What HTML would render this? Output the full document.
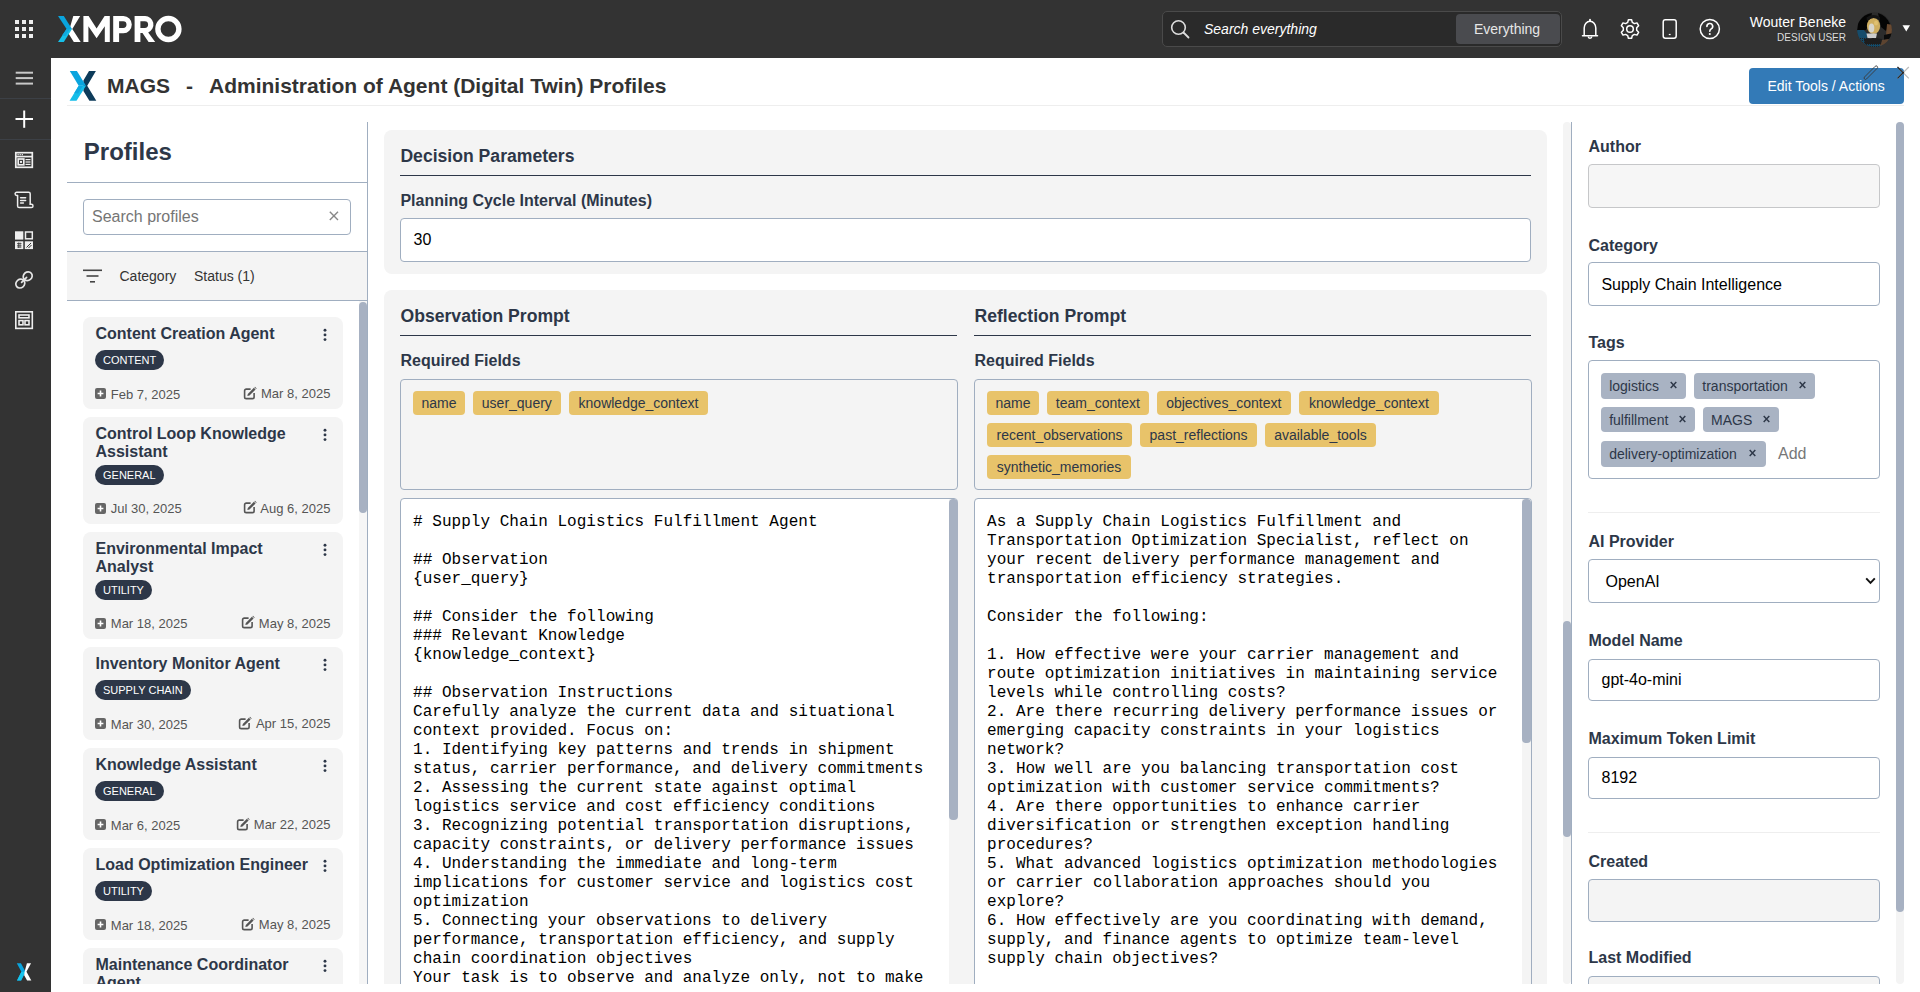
<!DOCTYPE html>
<html><head><meta charset="utf-8">
<style>
*{box-sizing:border-box;margin:0;padding:0}
html,body{width:1920px;height:992px;overflow:hidden;background:#fff;font-family:"Liberation Sans",sans-serif;color:#2d3748}
.a{position:absolute}
.t{position:absolute;white-space:nowrap;line-height:1}
.b{font-weight:bold}
.inp{position:absolute;background:#fff;border:1px solid #a0aec0;border-radius:4px}
.card{position:absolute;left:83px;width:260px;background:#f4f4f4;border-radius:8px}
.badge{position:absolute;left:12px;height:20px;border-radius:10px;background:#2d3748;color:#fff;font-size:11px;line-height:20px;padding:0 8px;white-space:nowrap}
.ytag{position:absolute;height:24px;background:#e8c36a;border-radius:4px;font-size:14px;line-height:24px;color:#2d3748;padding:0 8px;white-space:nowrap}
.gtag{position:absolute;height:25px;background:#a9b3c3;border-radius:4px;font-size:14px;line-height:25px;color:#2d3748;padding:0 8px;white-space:nowrap}
.mono{position:absolute;font-family:"Liberation Mono",monospace;font-size:16px;line-height:19px;letter-spacing:0.03px;white-space:pre;color:#000}
.sbt{position:absolute;background:#f4f4f4;border-radius:4px}
.sbth{position:absolute;background:#a7b1c2;border-radius:4px}
</style></head><body>
<div class="a" style="left:0;top:0;width:1920px;height:58px;background:#333"></div>
<div class="a" style="left:0;top:57px;width:51px;height:935px;background:#333"></div>
<div class="a" style="left:15px;top:20px;width:4px;height:4px;background:#eee"></div><div class="a" style="left:22px;top:20px;width:4px;height:4px;background:#eee"></div><div class="a" style="left:29px;top:20px;width:4px;height:4px;background:#eee"></div><div class="a" style="left:15px;top:27px;width:4px;height:4px;background:#eee"></div><div class="a" style="left:22px;top:27px;width:4px;height:4px;background:#eee"></div><div class="a" style="left:29px;top:27px;width:4px;height:4px;background:#eee"></div><div class="a" style="left:15px;top:34px;width:4px;height:4px;background:#eee"></div><div class="a" style="left:22px;top:34px;width:4px;height:4px;background:#eee"></div><div class="a" style="left:29px;top:34px;width:4px;height:4px;background:#eee"></div>
<svg class="a" style="left:56px;top:14px" width="130" height="30" viewBox="56 14 130 30">
<polygon points="73.3,16 80.2,16 72.3,29 80.7,42 73.8,42 68.5,33.5 69.5,29" fill="#fff"/>
<polygon points="58,16 63.8,16 72,29 66.6,29" fill="#0aa4dd"/>
<polygon points="66.6,29 72,29 63.8,42 58,42" fill="#16c0ea"/>
<polygon points="62,35.5 66.6,29 70,29 65.5,36" fill="#0fa9e0"/>
<path d="M83.4,42 V16 H88.6 L96.6,28.5 L104.6,16 H109.8 V42 H104.8 V26.2 L96.6,38.2 L88.4,26.2 V42 Z" fill="#fff"/>
<path d="M113.2,42 V16 H123.4 A8.4,8.6 0 0 1 123.4,33.2 H119.1 V42 Z M119.1,21.2 V27.9 H123.2 A3.3,3.35 0 0 0 123.2,21.2 Z" fill="#fff" fill-rule="evenodd"/>
<path d="M134.6,42 V16 H145 A8.3,8.5 0 0 1 148.2,32.4 L155.2,42 H148.6 L142.5,33.1 H140.4 V42 Z M140.4,21.2 V27.9 H144.8 A3.3,3.35 0 0 0 144.8,21.2 Z" fill="#fff" fill-rule="evenodd"/>
<path d="M168.4,15.8 A13.2,13.2 0 1 1 168.4,42.2 A13.2,13.2 0 1 1 168.4,15.8 Z M168.4,21.2 A7.8,7.8 0 1 0 168.4,36.8 A7.8,7.8 0 1 0 168.4,21.2 Z" fill="#fff" fill-rule="evenodd"/>
</svg>
<div class="a" style="left:1162px;top:11px;width:400px;height:36px;background:#2a2a2a;border:1px solid #4a4a4a;border-radius:5px"></div>
<svg class="a" style="left:1170px;top:19px" width="22" height="22" viewBox="0 0 22 22"><circle cx="8.5" cy="8.5" r="6.8" fill="none" stroke="#ddd" stroke-width="1.6"/><line x1="13.5" y1="13.5" x2="18.5" y2="18.5" stroke="#ddd" stroke-width="1.8" stroke-linecap="round"/></svg>
<div class="t " style="left:1204px;top:21.5px;font-size:14px;color:#fff;font-style:italic">Search everything</div>
<div class="a" style="left:1456px;top:14px;width:104px;height:30px;background:#4a4b4f;border-radius:4px"></div>
<div class="t " style="left:1474px;top:21.5px;font-size:14px;color:#e6e6e6">Everything</div>
<svg class="a" style="left:1578px;top:16px" width="150" height="26" viewBox="1578 16 150 26">
<path d="M1590,19.5 a1.3,1.3 0 0 1 0,0 M1584.2,35.8 V28 a5.8,6.8 0 0 1 11.6,0 V35.8 Z M1582.5,35.8 H1597.5" fill="none" stroke="#fff" stroke-width="1.5" stroke-linejoin="round" stroke-linecap="round"/>
<path d="M1588.2,36.5 a1.8,1.8 0 0 0 3.6,0" fill="none" stroke="#fff" stroke-width="1.4"/>
<circle cx="1590" cy="20.3" r="1" fill="#fff"/>
<g transform="translate(1630,29)" fill="none" stroke="#fff" stroke-width="1.5" stroke-linejoin="round">
<path d="M-1.6,-9.2 H1.6 L2.3,-6.6 L4.4,-5.4 L7,-6.1 L8.6,-3.3 L6.7,-1.3 V1.3 L8.6,3.3 L7,6.1 L4.4,5.4 L2.3,6.6 L1.6,9.2 H-1.6 L-2.3,6.6 L-4.4,5.4 L-7,6.1 L-8.6,3.3 L-6.7,1.3 V-1.3 L-8.6,-3.3 L-7,-6.1 L-4.4,-5.4 L-2.3,-6.6 Z"/>
<circle cx="0" cy="0" r="3.3"/>
</g>
<rect x="1663.2" y="19.7" width="13" height="18.6" rx="2.2" fill="none" stroke="#fff" stroke-width="1.5"/>
<line x1="1668.8" y1="34.5" x2="1670.6" y2="34.5" stroke="#fff" stroke-width="1.2"/>
<circle cx="1709.8" cy="29" r="9.6" fill="none" stroke="#fff" stroke-width="1.5"/>
<path d="M1706.9,26.4 a2.9,2.9 0 1 1 4.3,2.5 c-1,0.6 -1.4,1.1 -1.4,2.3" fill="none" stroke="#fff" stroke-width="1.6" stroke-linecap="round"/>
<circle cx="1709.8" cy="34" r="1.05" fill="#fff"/>
</svg>
<div class="t" style="right:74px;top:14.7px;font-size:14px;color:#fff">Wouter Beneke</div>
<div class="t" style="right:74px;top:33px;font-size:10px;color:#ddd">DESIGN USER</div>
<svg class="a" style="left:1856px;top:12px" width="38" height="36" viewBox="1856 12 38 36">
<defs><clipPath id="av"><circle cx="1874.5" cy="29.7" r="17.4"/></clipPath>
<pattern id="dots" width="2" height="2" patternUnits="userSpaceOnUse"><rect width="2" height="2" fill="#134a68"/><rect width="1" height="1" fill="#222"/></pattern></defs>
<g clip-path="url(#av)">
<rect x="1856" y="12" width="38" height="36" fill="#2c2c2c"/>
<path d="M1857,31 L1858,22 Q1864,14 1872,13 L1870,22 L1866,30 Z" fill="#040404"/>
<path d="M1878,13 Q1887,16 1890,24 L1886,31 L1881,27 L1879,18 Z" fill="#050505"/>
<path d="M1856,30 H1864 L1868,35 L1866,39 H1856 Z" fill="#164c6b"/>
<path d="M1859,38 L1868,38 L1884,43 L1882,48 H1860 Z" fill="url(#dots)"/>
<path d="M1887,24 L1893,25 V34 L1886,35 Z" fill="#6a4a30"/>
<path d="M1884,35 L1893,33 V38 L1884,40 Z" fill="#0a0a0a"/>
<path d="M1882,40 L1889,39 L1887,46 L1880,46 Z" fill="#5d4430"/>
<ellipse cx="1873.5" cy="26" rx="6.6" ry="8" fill="#cfae60"/>
<ellipse cx="1871.5" cy="28" rx="2.8" ry="4.6" fill="#d8d5cc"/>
<ellipse cx="1876" cy="23" rx="2" ry="2.5" fill="#e0c070"/>
<path d="M1867,21 Q1873,15.5 1880,20.5 L1880,17 Q1873,13 1866.5,17.5 Z" fill="#141414"/>
<path d="M1866.5,33.5 L1877,33.5 L1876,38 L1872,39.5 L1867.5,38 Z" fill="#cdcdcd"/>
<path d="M1864,39 Q1873,37 1882,39 L1881,44 H1865 Z" fill="#1d1d1d"/>
</g></svg>
<svg class="a" style="left:1901px;top:24px" width="10" height="8" viewBox="0 0 10 8"><polygon points="1.5,1.3 9,1.3 5.25,7.4" fill="#fff"/></svg>
<svg class="a" style="left:0;top:57px" width="51" height="935" viewBox="0 57 51 935">
<g stroke="#c8c8c8" stroke-width="2" stroke-linecap="butt"><line x1="15.7" y1="72.7" x2="33" y2="72.7"/><line x1="15.7" y1="78.1" x2="33" y2="78.1"/><line x1="15.7" y1="83.6" x2="33" y2="83.6"/></g>
<line x1="0" y1="98.5" x2="51" y2="98.5" stroke="#3c4046" stroke-width="1"/>
<g stroke="#fff" stroke-width="2"><line x1="15.5" y1="119" x2="33" y2="119"/><line x1="24.2" y1="110.5" x2="24.2" y2="127.8"/></g>
<line x1="0" y1="139.5" x2="51" y2="139.5" stroke="#3c4046" stroke-width="1"/>
<g fill="none" stroke="#eee" stroke-width="1.7">
<rect x="15.8" y="152.7" width="16.5" height="14.6"/>
<line x1="15.8" y1="156.6" x2="32.3" y2="156.6"/>
<rect x="18.2" y="159" width="5.6" height="5.8"/>
<line x1="25.5" y1="159.6" x2="30.5" y2="159.6" stroke-width="1.2"/><line x1="25.5" y1="162" x2="30.5" y2="162" stroke-width="1.2"/><line x1="25.5" y1="164.4" x2="30.5" y2="164.4" stroke-width="1.2"/>
</g>
<rect x="20" y="160.9" width="2" height="2" fill="#eee"/>
<g fill="#eee"><rect x="17.5" y="154" width="1.2" height="1.3"/><rect x="19.6" y="154" width="1.2" height="1.3"/><rect x="21.7" y="154" width="1.2" height="1.3"/></g>
<g fill="none" stroke="#eee" stroke-width="1.5" stroke-linejoin="round" stroke-linecap="round">
<path d="M17.4,195.5 H16.7 a1.6,1.65 0 0 1 0,-3.3 H28.6 a1.6,1.6 0 0 1 1.6,1.6 V204.3"/>
<path d="M17.6,195.5 V205.9 a1.6,1.6 0 0 0 1.6,1.6 H31.4 a1.6,1.6 0 0 0 0,-3.2 H30.2"/>
<line x1="20.6" y1="197.7" x2="25.6" y2="197.7"/><line x1="20.6" y1="200.4" x2="25.6" y2="200.4"/><line x1="20.6" y1="203.1" x2="23.4" y2="203.1"/>
</g>
<rect x="15" y="231.3" width="8.3" height="8.3" fill="#eee"/>
<rect x="25.5" y="232" width="6.8" height="6.8" fill="none" stroke="#eee" stroke-width="1.5"/>
<rect x="15" y="241.3" width="8.3" height="7.8" fill="#eee"/>
<rect x="24.8" y="241.3" width="8.2" height="7.8" fill="#eee"/>
<g stroke="#333" stroke-width="0.7"><line x1="17" y1="243.5" x2="21.5" y2="243.5"/><line x1="17" y1="245.3" x2="21.5" y2="245.3"/><line x1="17" y1="247" x2="21.5" y2="247"/><line x1="18.5" y1="242.5" x2="18.5" y2="248"/><line x1="20" y1="242.5" x2="20" y2="248"/></g>
<g stroke="#333" stroke-width="1"><line x1="26.5" y1="247.5" x2="31" y2="243"/><line x1="28.5" y1="248" x2="31.5" y2="245"/></g>
<g fill="none" stroke="#e6e6e6" stroke-width="1.7" stroke-linecap="round">
<ellipse cx="0" cy="0" rx="4.7" ry="4.2" transform="translate(27.7,276.2) rotate(-40)"/>
<ellipse cx="0" cy="0" rx="4.7" ry="4.2" transform="translate(20.3,283.6) rotate(-40)"/>
<line x1="21.6" y1="282.4" x2="26.6" y2="277.3"/>
</g>
<g fill="none" stroke="#eee" stroke-width="1.6">
<rect x="15.8" y="311.8" width="16.5" height="16.6"/>
<rect x="19" y="315" width="10" height="2.8"/>
<rect x="19" y="320.6" width="4" height="4.2"/>
<rect x="25" y="320.6" width="4" height="4.2"/>
</g>
<g transform="translate(16.8,963.3) scale(0.92,0.95)">
<polygon points="0,0 4.5,0 9.5,9 4.7,18 0.2,18 5,9" fill="#0aa4dd"/>
<polygon points="0.2,18 4.7,18 9.5,9 6.8,9 5,9" fill="#18c4ec"/>
<polygon points="11,0 15.5,0 10.5,9 15.8,18 11.2,18 8,12.5 8.5,9" fill="#fff"/>
</g>
</svg>
<svg class="a" style="left:68px;top:70px" width="30" height="32" viewBox="68 70 30 32">
<polygon points="89,71 95.9,71 87.2,85.8 96.3,100.7 89.4,100.7 83.4,91 83.4,80.6" fill="#0d3b5a"/>
<polygon points="69.8,71 76.9,71 86,85.8 78.7,85.8" fill="#0aa4de"/>
<polygon points="78.7,85.8 86,85.8 76.5,100.7 69.6,100.7" fill="#14bde9"/>
<polygon points="74.3,93 78.7,85.8 83,85.8 78.2,93.5" fill="#0ea8e0"/>
</svg>
<div class="t " style="left:107px;top:75px;font-size:21px;color:#333;font-weight:bold">MAGS</div>
<div class="t " style="left:186px;top:75px;font-size:21px;color:#333;font-weight:bold">-</div>
<div class="t " style="left:209px;top:75px;font-size:21px;color:#333;font-weight:bold">Administration of Agent (Digital Twin) Profiles</div>
<div class="a" style="left:67px;top:105px;width:1837px;height:1px;background:#eee"></div>
<div class="a" style="left:1749px;top:68px;width:155px;height:36px;background:#337ab7;border-radius:4px"></div>
<div class="t " style="left:1767.5px;top:78.7px;font-size:14px;color:#fff">Edit Tools / Actions</div>
<svg class="a" style="left:1860px;top:62px" width="52" height="22" viewBox="1860 62 52 22">
<path d="M1864.5,77 L1875.2,66.3 a1.4,1.4 0 0 1 2,2 L1866.5,79 a1.4,1.4 0 0 1 -2,-2 Z" fill="none" stroke="#3a3a3a" stroke-width="0.9"/>
<line x1="1897.5" y1="67" x2="1908.8" y2="78.3" stroke="#bbb" stroke-width="1.2"/>
<line x1="1908.8" y1="67" x2="1897.5" y2="78.3" stroke="#bbb" stroke-width="1.2"/>
<line x1="1897.5" y1="67" x2="1903.8" y2="73.3" stroke="#222" stroke-width="1.2"/>
<line x1="1903.8" y1="72" x2="1897.5" y2="78.3" stroke="#222" stroke-width="1.2"/>
</svg>
<div class="a" style="left:367px;top:122px;width:1px;height:862px;background:#a0aec0"></div>
<div class="t " style="left:83.8px;top:140px;font-size:24px;color:#2d3748;font-weight:bold">Profiles</div>
<div class="a" style="left:67px;top:182px;width:300px;height:1px;background:#a0aec0"></div>
<div class="inp" style="left:83px;top:199px;width:268px;height:36px"></div>
<div class="t " style="left:92px;top:209px;font-size:16px;color:#757575">Search profiles</div>
<svg class="a" style="left:328px;top:210px" width="12" height="12" viewBox="0 0 12 12"><path d="M1.8,1.8 L10,10 M10,1.8 L1.8,10" stroke="#888" stroke-width="1.4"/></svg>
<div class="a" style="left:67px;top:251px;width:300px;height:50px;background:#f4f4f4;border-top:1px solid #a0aec0;border-bottom:1px solid #a0aec0"></div>
<svg class="a" style="left:82px;top:268px" width="22" height="16" viewBox="82 268 22 16"><g stroke="#444" stroke-width="1.6"><line x1="83" y1="270.3" x2="102" y2="270.3"/><line x1="86.5" y1="276" x2="98.5" y2="276"/><line x1="90" y1="281.8" x2="95" y2="281.8"/></g></svg>
<div class="t " style="left:119.5px;top:268.7px;font-size:14px;color:#333">Category</div>
<div class="t " style="left:194px;top:268.7px;font-size:14px;color:#333">Status (1)</div>
<div class="a" style="left:359px;top:301px;width:8px;height:683px;background:#f6f6f6"></div>
<div class="sbth" style="left:359px;top:302px;width:8px;height:211px"></div>
<div class="a" style="left:67px;top:301px;width:292px;height:683px;overflow:hidden">
<div class="card" style="left:16px;top:16px;height:91.5px"></div>
<div class="t " style="left:28.5px;top:25.19999999999999px;font-size:16px;color:#2d3748;font-weight:bold">Content Creation Agent</div>
<svg class="a" style="left:255px;top:27px" width="6" height="14" viewBox="0 0 6 14"><circle cx="3" cy="2.2" r="1.45" fill="#2d3748"/><circle cx="3" cy="6.9" r="1.45" fill="#2d3748"/><circle cx="3" cy="11.6" r="1.45" fill="#2d3748"/></svg>
<div class="badge" style="left:28px;top:49px">CONTENT</div>
<svg class="a" style="left:28px;top:87.30000000000001px" width="11" height="11" viewBox="0 0 11 11"><rect x="0" y="0" width="11" height="11" rx="2" fill="#666"/><path d="M5.5,2.6 V8.4 M2.6,5.5 H8.4" stroke="#fff" stroke-width="1.6"/></svg>
<div class="t " style="left:43.8px;top:86.5px;font-size:13px;color:#555">Feb 7, 2025</div>
<div class="a" style="right:28.600000000000023px;top:85.30000000000001px;display:flex;align-items:flex-start;white-space:nowrap"><svg width="14" height="14" viewBox="0 0 14 14" style="margin-right:3.6px;margin-top:-0.4px"><path d="M7.6,3.1 H3.3 a1.7,1.7 0 0 0 -1.7,1.7 V10.9 a1.7,1.7 0 0 0 1.7,1.7 H9.4 a1.7,1.7 0 0 0 1.7,-1.7 V7" fill="none" stroke="#555" stroke-width="1.6"/><path d="M4.3,10 L4.8,7.9 L10.9,1.8 L12.6,3.5 L6.5,9.6 Z" fill="#555"/><path d="M11.4,1.3 L12,0.7 L13.7,2.4 L13.1,3 Z" fill="#555"/></svg><span style="font-size:13px;line-height:1;color:#555;margin-top:1.2px">Mar 8, 2025</span></div>
<div class="card" style="left:16px;top:116px;height:106.7px"></div>
<div class="t " style="left:28.5px;top:124.80000000000001px;font-size:16px;color:#2d3748;font-weight:bold">Control Loop Knowledge</div>
<div class="t " style="left:28.5px;top:142.60000000000002px;font-size:16px;color:#2d3748;font-weight:bold">Assistant</div>
<svg class="a" style="left:255px;top:127px" width="6" height="14" viewBox="0 0 6 14"><circle cx="3" cy="2.2" r="1.45" fill="#2d3748"/><circle cx="3" cy="6.9" r="1.45" fill="#2d3748"/><circle cx="3" cy="11.6" r="1.45" fill="#2d3748"/></svg>
<div class="badge" style="left:28px;top:164px">GENERAL</div>
<svg class="a" style="left:28px;top:201.59999999999997px" width="11" height="11" viewBox="0 0 11 11"><rect x="0" y="0" width="11" height="11" rx="2" fill="#666"/><path d="M5.5,2.6 V8.4 M2.6,5.5 H8.4" stroke="#fff" stroke-width="1.6"/></svg>
<div class="t " style="left:43.8px;top:200.79999999999995px;font-size:13px;color:#555">Jul 30, 2025</div>
<div class="a" style="right:28.600000000000023px;top:199.59999999999997px;display:flex;align-items:flex-start;white-space:nowrap"><svg width="14" height="14" viewBox="0 0 14 14" style="margin-right:3.6px;margin-top:-0.4px"><path d="M7.6,3.1 H3.3 a1.7,1.7 0 0 0 -1.7,1.7 V10.9 a1.7,1.7 0 0 0 1.7,1.7 H9.4 a1.7,1.7 0 0 0 1.7,-1.7 V7" fill="none" stroke="#555" stroke-width="1.6"/><path d="M4.3,10 L4.8,7.9 L10.9,1.8 L12.6,3.5 L6.5,9.6 Z" fill="#555"/><path d="M11.4,1.3 L12,0.7 L13.7,2.4 L13.1,3 Z" fill="#555"/></svg><span style="font-size:13px;line-height:1;color:#555;margin-top:1.2px">Aug 6, 2025</span></div>
<div class="card" style="left:16px;top:231px;height:106.7px"></div>
<div class="t " style="left:28.5px;top:239.79999999999995px;font-size:16px;color:#2d3748;font-weight:bold">Environmental Impact</div>
<div class="t " style="left:28.5px;top:257.5999999999999px;font-size:16px;color:#2d3748;font-weight:bold">Analyst</div>
<svg class="a" style="left:255px;top:242px" width="6" height="14" viewBox="0 0 6 14"><circle cx="3" cy="2.2" r="1.45" fill="#2d3748"/><circle cx="3" cy="6.9" r="1.45" fill="#2d3748"/><circle cx="3" cy="11.6" r="1.45" fill="#2d3748"/></svg>
<div class="badge" style="left:28px;top:279px">UTILITY</div>
<svg class="a" style="left:28px;top:316.5999999999999px" width="11" height="11" viewBox="0 0 11 11"><rect x="0" y="0" width="11" height="11" rx="2" fill="#666"/><path d="M5.5,2.6 V8.4 M2.6,5.5 H8.4" stroke="#fff" stroke-width="1.6"/></svg>
<div class="t " style="left:43.8px;top:315.79999999999995px;font-size:13px;color:#555">Mar 18, 2025</div>
<div class="a" style="right:28.600000000000023px;top:314.5999999999999px;display:flex;align-items:flex-start;white-space:nowrap"><svg width="14" height="14" viewBox="0 0 14 14" style="margin-right:3.6px;margin-top:-0.4px"><path d="M7.6,3.1 H3.3 a1.7,1.7 0 0 0 -1.7,1.7 V10.9 a1.7,1.7 0 0 0 1.7,1.7 H9.4 a1.7,1.7 0 0 0 1.7,-1.7 V7" fill="none" stroke="#555" stroke-width="1.6"/><path d="M4.3,10 L4.8,7.9 L10.9,1.8 L12.6,3.5 L6.5,9.6 Z" fill="#555"/><path d="M11.4,1.3 L12,0.7 L13.7,2.4 L13.1,3 Z" fill="#555"/></svg><span style="font-size:13px;line-height:1;color:#555;margin-top:1.2px">May 8, 2025</span></div>
<div class="card" style="left:16px;top:346px;height:92.7px"></div>
<div class="t " style="left:28.5px;top:355.20000000000005px;font-size:16px;color:#2d3748;font-weight:bold">Inventory Monitor Agent</div>
<svg class="a" style="left:255px;top:357px" width="6" height="14" viewBox="0 0 6 14"><circle cx="3" cy="2.2" r="1.45" fill="#2d3748"/><circle cx="3" cy="6.9" r="1.45" fill="#2d3748"/><circle cx="3" cy="11.6" r="1.45" fill="#2d3748"/></svg>
<div class="badge" style="left:28px;top:379px">SUPPLY CHAIN</div>
<svg class="a" style="left:28px;top:417.29999999999995px" width="11" height="11" viewBox="0 0 11 11"><rect x="0" y="0" width="11" height="11" rx="2" fill="#666"/><path d="M5.5,2.6 V8.4 M2.6,5.5 H8.4" stroke="#fff" stroke-width="1.6"/></svg>
<div class="t " style="left:43.8px;top:416.5px;font-size:13px;color:#555">Mar 30, 2025</div>
<div class="a" style="right:28.600000000000023px;top:415.29999999999995px;display:flex;align-items:flex-start;white-space:nowrap"><svg width="14" height="14" viewBox="0 0 14 14" style="margin-right:3.6px;margin-top:-0.4px"><path d="M7.6,3.1 H3.3 a1.7,1.7 0 0 0 -1.7,1.7 V10.9 a1.7,1.7 0 0 0 1.7,1.7 H9.4 a1.7,1.7 0 0 0 1.7,-1.7 V7" fill="none" stroke="#555" stroke-width="1.6"/><path d="M4.3,10 L4.8,7.9 L10.9,1.8 L12.6,3.5 L6.5,9.6 Z" fill="#555"/><path d="M11.4,1.3 L12,0.7 L13.7,2.4 L13.1,3 Z" fill="#555"/></svg><span style="font-size:13px;line-height:1;color:#555;margin-top:1.2px">Apr 15, 2025</span></div>
<div class="card" style="left:16px;top:447px;height:91.6px"></div>
<div class="t " style="left:28.5px;top:456.20000000000005px;font-size:16px;color:#2d3748;font-weight:bold">Knowledge Assistant</div>
<svg class="a" style="left:255px;top:458px" width="6" height="14" viewBox="0 0 6 14"><circle cx="3" cy="2.2" r="1.45" fill="#2d3748"/><circle cx="3" cy="6.9" r="1.45" fill="#2d3748"/><circle cx="3" cy="11.6" r="1.45" fill="#2d3748"/></svg>
<div class="badge" style="left:28px;top:480px">GENERAL</div>
<svg class="a" style="left:28px;top:518.3px" width="11" height="11" viewBox="0 0 11 11"><rect x="0" y="0" width="11" height="11" rx="2" fill="#666"/><path d="M5.5,2.6 V8.4 M2.6,5.5 H8.4" stroke="#fff" stroke-width="1.6"/></svg>
<div class="t " style="left:43.8px;top:517.5px;font-size:13px;color:#555">Mar 6, 2025</div>
<div class="a" style="right:28.600000000000023px;top:516.3px;display:flex;align-items:flex-start;white-space:nowrap"><svg width="14" height="14" viewBox="0 0 14 14" style="margin-right:3.6px;margin-top:-0.4px"><path d="M7.6,3.1 H3.3 a1.7,1.7 0 0 0 -1.7,1.7 V10.9 a1.7,1.7 0 0 0 1.7,1.7 H9.4 a1.7,1.7 0 0 0 1.7,-1.7 V7" fill="none" stroke="#555" stroke-width="1.6"/><path d="M4.3,10 L4.8,7.9 L10.9,1.8 L12.6,3.5 L6.5,9.6 Z" fill="#555"/><path d="M11.4,1.3 L12,0.7 L13.7,2.4 L13.1,3 Z" fill="#555"/></svg><span style="font-size:13px;line-height:1;color:#555;margin-top:1.2px">Mar 22, 2025</span></div>
<div class="card" style="left:16px;top:547px;height:91.5px"></div>
<div class="t " style="left:28.5px;top:556.2px;font-size:16px;color:#2d3748;font-weight:bold">Load Optimization Engineer</div>
<svg class="a" style="left:255px;top:558px" width="6" height="14" viewBox="0 0 6 14"><circle cx="3" cy="2.2" r="1.45" fill="#2d3748"/><circle cx="3" cy="6.9" r="1.45" fill="#2d3748"/><circle cx="3" cy="11.6" r="1.45" fill="#2d3748"/></svg>
<div class="badge" style="left:28px;top:580px">UTILITY</div>
<svg class="a" style="left:28px;top:618.3px" width="11" height="11" viewBox="0 0 11 11"><rect x="0" y="0" width="11" height="11" rx="2" fill="#666"/><path d="M5.5,2.6 V8.4 M2.6,5.5 H8.4" stroke="#fff" stroke-width="1.6"/></svg>
<div class="t " style="left:43.8px;top:617.5px;font-size:13px;color:#555">Mar 18, 2025</div>
<div class="a" style="right:28.600000000000023px;top:616.3px;display:flex;align-items:flex-start;white-space:nowrap"><svg width="14" height="14" viewBox="0 0 14 14" style="margin-right:3.6px;margin-top:-0.4px"><path d="M7.6,3.1 H3.3 a1.7,1.7 0 0 0 -1.7,1.7 V10.9 a1.7,1.7 0 0 0 1.7,1.7 H9.4 a1.7,1.7 0 0 0 1.7,-1.7 V7" fill="none" stroke="#555" stroke-width="1.6"/><path d="M4.3,10 L4.8,7.9 L10.9,1.8 L12.6,3.5 L6.5,9.6 Z" fill="#555"/><path d="M11.4,1.3 L12,0.7 L13.7,2.4 L13.1,3 Z" fill="#555"/></svg><span style="font-size:13px;line-height:1;color:#555;margin-top:1.2px">May 8, 2025</span></div>
<div class="card" style="left:16px;top:647px;height:106.7px"></div>
<div class="t " style="left:28.5px;top:655.8px;font-size:16px;color:#2d3748;font-weight:bold">Maintenance Coordinator</div>
<div class="t " style="left:28.5px;top:673.5999999999999px;font-size:16px;color:#2d3748;font-weight:bold">Agent</div>
<svg class="a" style="left:255px;top:658px" width="6" height="14" viewBox="0 0 6 14"><circle cx="3" cy="2.2" r="1.45" fill="#2d3748"/><circle cx="3" cy="6.9" r="1.45" fill="#2d3748"/><circle cx="3" cy="11.6" r="1.45" fill="#2d3748"/></svg>
<div class="badge" style="left:28px;top:695px">UTILITY</div>
</div>
<div class="a" style="left:0;top:0;width:1920px;height:984px;overflow:hidden">
<div class="a" style="left:384px;top:130px;width:1163px;height:144px;background:#f4f4f4;border-radius:8px"></div>
<div class="t " style="left:400.4px;top:148px;font-size:17.6px;color:#2d3748;font-weight:bold">Decision Parameters</div>
<div class="a" style="left:400px;top:175px;width:1131px;height:1px;background:#2d3748"></div>
<div class="t " style="left:400.4px;top:193px;font-size:16px;color:#2d3748;font-weight:bold">Planning Cycle Interval (Minutes)</div>
<div class="inp" style="left:400px;top:218px;width:1131px;height:44px"></div>
<div class="t " style="left:413.5px;top:231.6px;font-size:16px;color:#000">30</div>
<div class="a" style="left:384px;top:290px;width:1163px;height:800px;background:#f4f4f4;border-radius:8px"></div>
<div class="t " style="left:400.5px;top:308.2px;font-size:17.6px;color:#2d3748;font-weight:bold">Observation Prompt</div>
<div class="a" style="left:400px;top:335px;width:557px;height:1px;background:#2d3748"></div>
<div class="t " style="left:400.5px;top:353.2px;font-size:16px;color:#2d3748;font-weight:bold">Required Fields</div>
<div class="a" style="left:400px;top:378.5px;width:558px;height:111px;border:1px solid #a0aec0;border-radius:4px"></div>
<div class="ytag" style="left:413.2px;top:391px;width:51.60000000000002px;padding:0;text-align:center">name</div>
<div class="ytag" style="left:473px;top:391px;width:87.70000000000005px;padding:0;text-align:center">user_query</div>
<div class="ytag" style="left:569px;top:391px;width:139px;padding:0;text-align:center">knowledge_context</div>
<div class="a" style="left:400px;top:498px;width:558px;height:600px;background:#fff;border:1px solid #a0aec0;border-radius:4px"></div>
<div class="mono" style="left:413px;top:513px"># Supply Chain Logistics Fulfillment Agent

## Observation
{user_query}

## Consider the following
### Relevant Knowledge
{knowledge_context}

## Observation Instructions
Carefully analyze the current data and situational
context provided. Focus on:
1. Identifying key patterns and trends in shipment
status, carrier performance, and delivery commitments
2. Assessing the current state against optimal
logistics service and cost efficiency conditions
3. Recognizing potential transportation disruptions,
capacity constraints, or delivery performance issues
4. Understanding the immediate and long-term
implications for customer service and logistics cost
optimization
5. Connecting your observations to delivery
performance, transportation efficiency, and supply
chain coordination objectives
Your task is to observe and analyze only, not to make
recommendations.</div>
<div class="t " style="left:974.5px;top:308.2px;font-size:17.6px;color:#2d3748;font-weight:bold">Reflection Prompt</div>
<div class="a" style="left:974px;top:335px;width:557px;height:1px;background:#2d3748"></div>
<div class="t " style="left:974.5px;top:353.2px;font-size:16px;color:#2d3748;font-weight:bold">Required Fields</div>
<div class="a" style="left:974px;top:378.5px;width:558px;height:111px;border:1px solid #a0aec0;border-radius:4px"></div>
<div class="ytag" style="left:987.2px;top:391px;width:51.549999999999955px;padding:0;text-align:center">name</div>
<div class="ytag" style="left:1046.9px;top:391px;width:101.84999999999991px;padding:0;text-align:center">team_context</div>
<div class="ytag" style="left:1156.9px;top:391px;width:133.69999999999982px;padding:0;text-align:center">objectives_context</div>
<div class="ytag" style="left:1299px;top:391px;width:139.75px;padding:0;text-align:center">knowledge_context</div>
<div class="ytag" style="left:987.2px;top:423px;width:144.70000000000005px;padding:0;text-align:center">recent_observations</div>
<div class="ytag" style="left:1140.3px;top:423px;width:116.60000000000014px;padding:0;text-align:center">past_reflections</div>
<div class="ytag" style="left:1265.3px;top:423px;width:110.29999999999995px;padding:0;text-align:center">available_tools</div>
<div class="ytag" style="left:987.2px;top:455px;width:143.70000000000005px;padding:0;text-align:center">synthetic_memories</div>
<div class="a" style="left:974px;top:498px;width:558px;height:600px;background:#fff;border:1px solid #a0aec0;border-radius:4px"></div>
<div class="mono" style="left:987px;top:513px">As a Supply Chain Logistics Fulfillment and
Transportation Optimization Specialist, reflect on
your recent delivery performance management and
transportation efficiency strategies.

Consider the following:

1. How effective were your carrier management and
route optimization initiatives in maintaining service
levels while controlling costs?
2. Are there recurring delivery performance issues or
emerging capacity constraints in your logistics
network?
3. How well are you balancing transportation cost
optimization with customer service commitments?
4. Are there opportunities to enhance carrier
diversification or strengthen exception handling
procedures?
5. What advanced logistics optimization methodologies
or carrier collaboration approaches should you
explore?
6. How effectively are you coordinating with demand,
supply, and finance agents to optimize team-level
supply chain objectives?</div>
</div>
<div class="a" style="left:0;top:0;width:1920px;height:984px;overflow:hidden"><div class="sbt" style="left:949px;top:499px;width:8.5px;height:600px;border-radius:0 4px 0 0"></div><div class="sbt" style="left:1522px;top:499px;width:8.5px;height:600px;border-radius:0 4px 0 0"></div></div>
<div class="sbth" style="left:949px;top:499px;width:8.5px;height:321px"></div>
<div class="sbth" style="left:1522px;top:499px;width:8.5px;height:244px"></div>
<div class="sbt" style="left:1563px;top:122px;width:8px;height:862px"></div>
<div class="sbth" style="left:1563px;top:621px;width:8px;height:216px"></div>
<div class="a" style="left:1571px;top:122px;width:1px;height:862px;background:#a0aec0"></div>
<div class="t " style="left:1588.5px;top:139.1px;font-size:16px;color:#2d3748;font-weight:bold">Author</div>
<div class="a" style="left:1588px;top:164px;width:292px;height:43.6px;background:#f6f6f6;border:1px solid #c6c7c9;border-radius:4px"></div>
<div class="t " style="left:1588.5px;top:237.8px;font-size:16px;color:#2d3748;font-weight:bold">Category</div>
<div class="inp" style="left:1588px;top:262.3px;width:292px;height:43.4px"></div>
<div class="t " style="left:1601.4px;top:276.6px;font-size:16px;color:#000">Supply Chain Intelligence</div>
<div class="t " style="left:1588.5px;top:335.2px;font-size:16px;color:#2d3748;font-weight:bold">Tags</div>
<div class="inp" style="left:1588px;top:360.3px;width:292px;height:119.2px"></div>
<div class="a" style="left:1601.2px;top:373.4px;width:84.59999999999991px;height:25.2px;background:#a9b3c3;border-radius:4px"></div>
<div class="t " style="left:1609.2px;top:379.0px;font-size:14px;color:#2d3748">logistics</div>
<svg class="a" style="left:1669.7px;top:380.79999999999995px" width="7" height="8" viewBox="0 0 7 8"><path d="M0.7,0.9 L6.3,6.9 M6.3,0.9 L0.7,6.9" stroke="#2d3748" stroke-width="1.45"/></svg>
<div class="a" style="left:1694.3px;top:373.4px;width:120.60000000000014px;height:25.2px;background:#a9b3c3;border-radius:4px"></div>
<div class="t " style="left:1702.3px;top:379.0px;font-size:14px;color:#2d3748">transportation</div>
<svg class="a" style="left:1798.8px;top:380.79999999999995px" width="7" height="8" viewBox="0 0 7 8"><path d="M0.7,0.9 L6.3,6.9 M6.3,0.9 L0.7,6.9" stroke="#2d3748" stroke-width="1.45"/></svg>
<div class="a" style="left:1601.2px;top:407.3px;width:93.70000000000005px;height:25.2px;background:#a9b3c3;border-radius:4px"></div>
<div class="t " style="left:1609.2px;top:412.90000000000003px;font-size:14px;color:#2d3748">fulfillment</div>
<svg class="a" style="left:1678.8px;top:414.7px" width="7" height="8" viewBox="0 0 7 8"><path d="M0.7,0.9 L6.3,6.9 M6.3,0.9 L0.7,6.9" stroke="#2d3748" stroke-width="1.45"/></svg>
<div class="a" style="left:1703px;top:407.3px;width:76px;height:25.2px;background:#a9b3c3;border-radius:4px"></div>
<div class="t " style="left:1711px;top:412.90000000000003px;font-size:14px;color:#2d3748">MAGS</div>
<svg class="a" style="left:1762.5px;top:414.7px" width="7" height="8" viewBox="0 0 7 8"><path d="M0.7,0.9 L6.3,6.9 M6.3,0.9 L0.7,6.9" stroke="#2d3748" stroke-width="1.45"/></svg>
<div class="a" style="left:1601.2px;top:441.4px;width:164.70000000000005px;height:25.2px;background:#a9b3c3;border-radius:4px"></div>
<div class="t " style="left:1609.2px;top:447.0px;font-size:14px;color:#2d3748">delivery-optimization</div>
<svg class="a" style="left:1749.4px;top:448.79999999999995px" width="7" height="8" viewBox="0 0 7 8"><path d="M0.7,0.9 L6.3,6.9 M6.3,0.9 L0.7,6.9" stroke="#2d3748" stroke-width="1.45"/></svg>
<div class="t " style="left:1778px;top:446.1px;font-size:16px;color:#777">Add</div>
<div class="a" style="left:1588px;top:512px;width:292px;height:1px;background:#eee"></div>
<div class="t " style="left:1588.5px;top:534px;font-size:16px;color:#2d3748;font-weight:bold">AI Provider</div>
<div class="inp" style="left:1588px;top:559.4px;width:292px;height:44px"></div>
<div class="t " style="left:1605.5px;top:574.2px;font-size:16px;color:#000">OpenAI</div>
<svg class="a" style="left:1865px;top:577px" width="11" height="8" viewBox="0 0 11 8"><path d="M1.2,1.3 L5.5,5.8 L9.8,1.3" fill="none" stroke="#111" stroke-width="1.9"/></svg>
<div class="t " style="left:1588.5px;top:633.4px;font-size:16px;color:#2d3748;font-weight:bold">Model Name</div>
<div class="inp" style="left:1588px;top:658.6px;width:292px;height:42.8px"></div>
<div class="t " style="left:1601.5px;top:672.2px;font-size:16px;color:#000">gpt-4o-mini</div>
<div class="t " style="left:1588.5px;top:731.2px;font-size:16px;color:#2d3748;font-weight:bold">Maximum Token Limit</div>
<div class="inp" style="left:1588px;top:756.6px;width:292px;height:42.9px"></div>
<div class="t " style="left:1601.5px;top:769.9px;font-size:16px;color:#000">8192</div>
<div class="a" style="left:1588px;top:832px;width:292px;height:1px;background:#eee"></div>
<div class="t " style="left:1588.5px;top:853.8px;font-size:16px;color:#2d3748;font-weight:bold">Created</div>
<div class="inp" style="left:1588px;top:879.2px;width:292px;height:42.5px;background:#f4f4f4"></div>
<div class="t " style="left:1588.5px;top:950.2px;font-size:16px;color:#2d3748;font-weight:bold">Last Modified</div>
<div class="a" style="left:0;top:0;width:1920px;height:984px;overflow:hidden;pointer-events:none"><div class="inp" style="left:1588px;top:976.3px;width:292px;height:43px;background:#f4f4f4"></div></div>
<div class="sbt" style="left:1896px;top:122px;width:8px;height:862px"></div>
<div class="sbth" style="left:1896px;top:122px;width:8px;height:789.5px"></div>
</body></html>
